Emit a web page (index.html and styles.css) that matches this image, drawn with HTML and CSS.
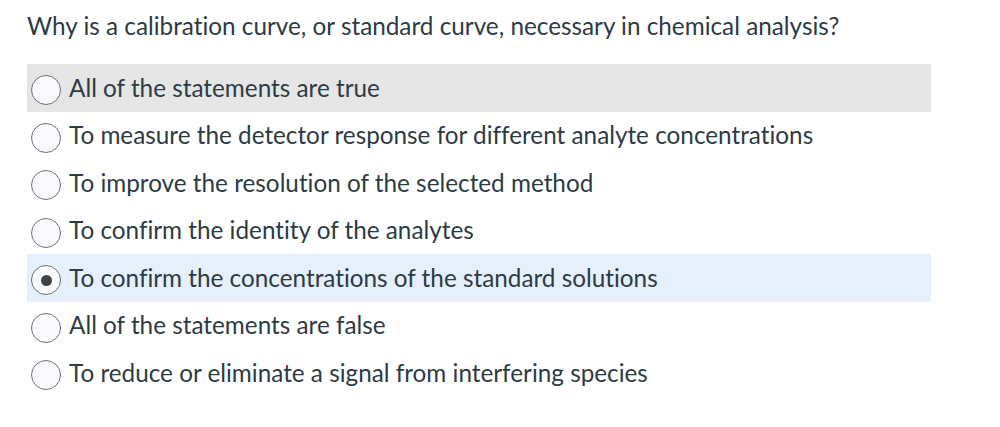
FILE: index.html
```html
<!DOCTYPE html>
<html>
<head>
<meta charset="utf-8">
<link rel="stylesheet" href="styles.css">
</head>
<body>
<div class="question">
  <p class="prompt">Why is a calibration curve, or standard curve, necessary in chemical analysis?</p>
  <div class="options">
    <label class="option hover"><span class="radio"></span><span class="text">All of the statements are true</span></label>
    <label class="option"><span class="radio"></span><span class="text">To measure the detector response for different analyte concentrations</span></label>
    <label class="option"><span class="radio"></span><span class="text">To improve the resolution of the selected method</span></label>
    <label class="option"><span class="radio"></span><span class="text">To confirm the identity of the analytes</span></label>
    <label class="option selected"><span class="radio checked"></span><span class="text">To confirm the concentrations of the standard solutions</span></label>
    <label class="option"><span class="radio"></span><span class="text">All of the statements are false</span></label>
    <label class="option"><span class="radio"></span><span class="text">To reduce or eliminate a signal from interfering species</span></label>
  </div>
</div>
</body>
</html>
```
FILE: styles.css
```css
html, body {
  margin: 0;
  padding: 0;
  background: #ffffff;
}
body {
  font-family: Lato, "Liberation Sans", sans-serif;
  color: #2d3b45;
  font-variant-ligatures: none;
}
.question {
  padding: 11px 69px 0 27px;
}
.prompt {
  margin: 0;
  font-size: 24.3px;
  line-height: 30px;
  color: #2d3b45;
}
.options {
  margin-top: 23px;
  display: flex;
  flex-direction: column;
}
.option {
  display: flex;
  align-items: center;
  height: 47.5px;
  box-sizing: border-box;
  padding: 5px 0 0 4px;
  font-size: 24.3px;
}
.option.hover {
  background: #e5e5e5;
}
.option.selected {
  background: #e5f0fb;
}
.radio {
  width: 28px;
  height: 28px;
  border: 1px solid #6f6f6f;
  border-radius: 50%;
  background: #f8f9fd;
  flex: none;
  display: flex;
  align-items: center;
  justify-content: center;
  margin-right: 8px;
}
.radio.checked::after {
  content: "";
  width: 11px;
  height: 11px;
  border-radius: 50%;
  background: #3f4245;
}
.text {
  line-height: 30px;
  margin-top: -5px;
}
```
